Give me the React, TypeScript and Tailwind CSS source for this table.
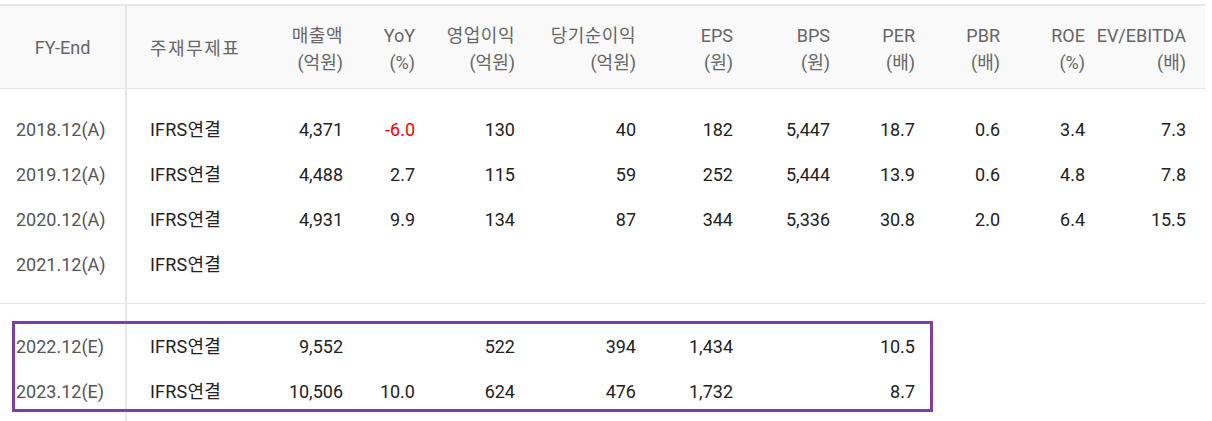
import React from 'react';

type Row = {
  period: string;
  values: (string | null)[];
};

const columns: { top: string; unit?: string }[] = [
  { top: '매출액', unit: '(억원)' },
  { top: 'YoY', unit: '(%)' },
  { top: '영업이익', unit: '(억원)' },
  { top: '당기순이익', unit: '(억원)' },
  { top: 'EPS', unit: '(원)' },
  { top: 'BPS', unit: '(원)' },
  { top: 'PER', unit: '(배)' },
  { top: 'PBR', unit: '(배)' },
  { top: 'ROE', unit: '(%)' },
  { top: 'EV/EBITDA', unit: '(배)' },
];

const actuals: Row[] = [
  { period: '2018.12(A)', values: ['4,371', '-6.0', '130', '40', '182', '5,447', '18.7', '0.6', '3.4', '7.3'] },
  { period: '2019.12(A)', values: ['4,488', '2.7', '115', '59', '252', '5,444', '13.9', '0.6', '4.8', '7.8'] },
  { period: '2020.12(A)', values: ['4,931', '9.9', '134', '87', '344', '5,336', '30.8', '2.0', '6.4', '15.5'] },
  { period: '2021.12(A)', values: [null, null, null, null, null, null, null, null, null, null] },
];

const estimates: Row[] = [
  { period: '2022.12(E)', values: ['9,552', null, '522', '394', '1,434', null, '10.5', null, null, null] },
  { period: '2023.12(E)', values: ['10,506', '10.0', '624', '476', '1,732', null, '8.7', null, null, null] },
];

// 열 너비: 오른쪽 정렬 기준선이 스크린샷과 맞도록 고정
const grid =
  'grid grid-cols-[127px_136px_80px_72px_100px_121px_97px_97px_85px_85px_85px_120px]';

const isKorean = (s: string) => /[가-힣]/.test(s);

const DataRow: React.FC<{ row: Row }> = ({ row }) => (
  <div className={`${grid} h-[45px] items-center`}>
    <div className="h-full flex items-center pl-4 text-[#555] border-r-2 border-[#e6e6ea]">{row.period}</div>
    <div className="pl-[23px] text-[#222] tracking-[0.2px]">IFRS연결</div>
    {row.values.map((v, i) => (
      <div
        key={i}
        className={`text-right tabular-nums ${i === 9 ? 'pr-[19px]' : ''} ${
          v && v.startsWith('-') ? 'text-[#ff0000]' : 'text-[#222]'
        }`}
      >
        {v ?? ''}
      </div>
    ))}
  </div>
);

export default function App() {
  return (
    <div
      className="w-[1212px] h-[421px] bg-white pt-1 overflow-hidden text-[18px] leading-[27px]"
      style={{ fontFamily: 'Roboto, "Noto Sans CJK KR", sans-serif' }}
    >
      <div className="w-[1205px] border-t-2 border-[#e6e6e6]">
        {/* 헤더 */}
        <div className={`${grid} h-[83px] bg-[#f9f9f9] border-b border-[#e6e6e6] text-[#666] pt-[3px]`}>
          <div className="flex items-center justify-center border-r-2 border-[#e6e6ea] -mt-[3px]">FY-End</div>
          <div className="flex items-center pl-[23px] tracking-[1.5px]">주재무제표</div>
          {columns.map((c, i) => (
            <div key={c.top} className={`flex flex-col justify-center items-end ${i === 9 ? 'pr-[19px]' : ''}`}>
              <span className={`whitespace-nowrap ${isKorean(c.top) ? 'tracking-[0.5px]' : ''}`}>{c.top}</span>
              <span>{c.unit}</span>
            </div>
          ))}
        </div>

        {/* 실적 */}
        <div className="border-b border-[#e6e6e6]">
          <div className={`${grid} h-[18px]`}>
            <div className="border-r-2 border-[#e6e6ea]" />
          </div>
          {actuals.map((r) => (
            <DataRow key={r.period} row={r} />
          ))}
          <div className={`${grid} h-[16px]`}>
            <div className="border-r-2 border-[#e6e6ea]" />
          </div>
        </div>

        {/* 추정치 */}
        <div className="relative">
          <div className={`${grid} h-[20px]`}>
            <div className="border-r-2 border-[#e6e6ea]" />
          </div>
          {estimates.map((r) => (
            <DataRow key={r.period} row={r} />
          ))}
          <div className={`${grid} h-[30px]`}>
            <div className="border-r-2 border-[#e6e6ea]" />
          </div>
          <div className="absolute left-[12px] top-[17px] w-[921px] h-[91px] border-[3px] border-[#7b3fa6] pointer-events-none" />
        </div>
      </div>
    </div>
  );
}
